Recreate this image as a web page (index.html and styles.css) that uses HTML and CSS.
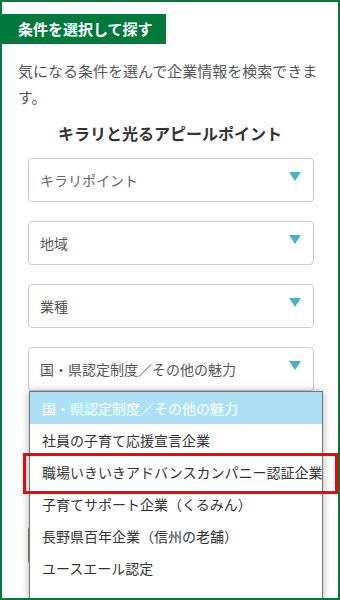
FILE: index.html
```html
<!DOCTYPE html>
<html lang="ja">
<head>
  <meta charset="utf-8">
  <meta name="viewport" content="width=device-width, initial-scale=1.0">
  <title>条件を選択して探す</title>
  <link rel="stylesheet" href="styles.css">
</head>
<body>
  <div class="panel">
    <h2 class="panel-title">条件を選択して探す</h2>
    <p class="lead">気になる条件を選んで企業情報を検索できます。</p>
    <h3 class="sub-title">キラリと光るアピールポイント</h3>

    <div class="selects">
      <div class="select-box placeholder">キラリポイント<span class="arrow"></span></div>
      <div class="select-box">地域<span class="arrow"></span></div>
      <div class="select-box">業種<span class="arrow"></span></div>
      <div class="select-box open">国・県認定制度／その他の魅力<span class="arrow"></span>
        <!-- opened option list of the last select -->
        <ul class="options">
          <li class="option selected">国・県認定制度／その他の魅力</li>
          <li class="option">社員の子育て応援宣言企業</li>
          <li class="option marked">職場いきいきアドバンスカンパニー認証企業</li>
          <li class="option">子育てサポート企業（くるみん）</li>
          <li class="option">長野県百年企業（信州の老舗）</li>
          <li class="option">ユースエール認定</li>
          <li class="option"></li>
        </ul>
      </div>
    </div>

    <!-- search button, hidden under the open list -->
    <button class="search-btn" type="button" aria-label="検索する"></button>
  </div>
</body>
</html>
```

FILE: styles.css
```css
* {
  box-sizing: border-box;
  margin: 0;
  padding: 0;
}
body {
  font-family: "Noto Sans CJK JP", "Noto Sans", sans-serif;
  background: #fff;
  color: #333;
}
.panel {
  border: 2px solid #00793d;
  min-height: 600px;
  padding-top: 12px;
  overflow: hidden;
}
.panel-title {
  display: inline-block;
  margin-left: -2px;
  height: 30px;
  line-height: 30px;
  padding: 0 13px 0 18px;
  background: #00793d;
  color: #fff;
  font-size: 15px;
  font-weight: 700;
}
.lead {
  margin-top: 14px;
  padding: 0 16px;
  font-size: 15px;
  line-height: 26px;
  color: #555;
}
.sub-title {
  margin-top: 11px;
  font-size: 16px;
  line-height: 24px;
  font-weight: 700;
  text-align: center;
  color: #333;
}
.selects {
  margin: 13px 24px 0 26px;
  display: flex;
  flex-direction: column;
  gap: 19px;
}
.select-box {
  position: relative;
  height: 44px;
  line-height: 42px;
  padding-left: 11px;
  border: 1px solid #ccc;
  border-radius: 4px;
  font-size: 14px;
  color: #555;
}
.select-box.placeholder {
  color: #666;
}
.arrow {
  position: absolute;
  right: 12px;
  top: 13px;
  width: 0;
  height: 0;
  border-left: 6px solid transparent;
  border-right: 6px solid transparent;
  border-top: 9px solid #4ab1c2;
}
.options {
  position: absolute;
  left: 0;
  top: 43px;
  width: 294px;
  list-style: none;
  background: #fff;
  border: 1px solid #777;
  box-shadow: 0 0 8px rgba(0, 0, 0, 0.3);
  z-index: 2;
}
.option {
  position: relative;
  height: 32px;
  line-height: 32px;
  padding-left: 12px;
  font-size: 14px;
  color: #333;
  white-space: nowrap;
}
.option.selected {
  background: #ade0f5;
  color: #fff;
}
.option.marked::after {
  content: "";
  position: absolute;
  left: -7px;
  top: -3px;
  width: 309px;
  height: 35px;
  border: 3px solid #f00;
}
.search-btn {
  display: block;
  margin: 135px 24px 0 26px;
  width: 286px;
  height: 38px;
  border: none;
  border-radius: 4px;
  background: #6c9b3c;
}
```
